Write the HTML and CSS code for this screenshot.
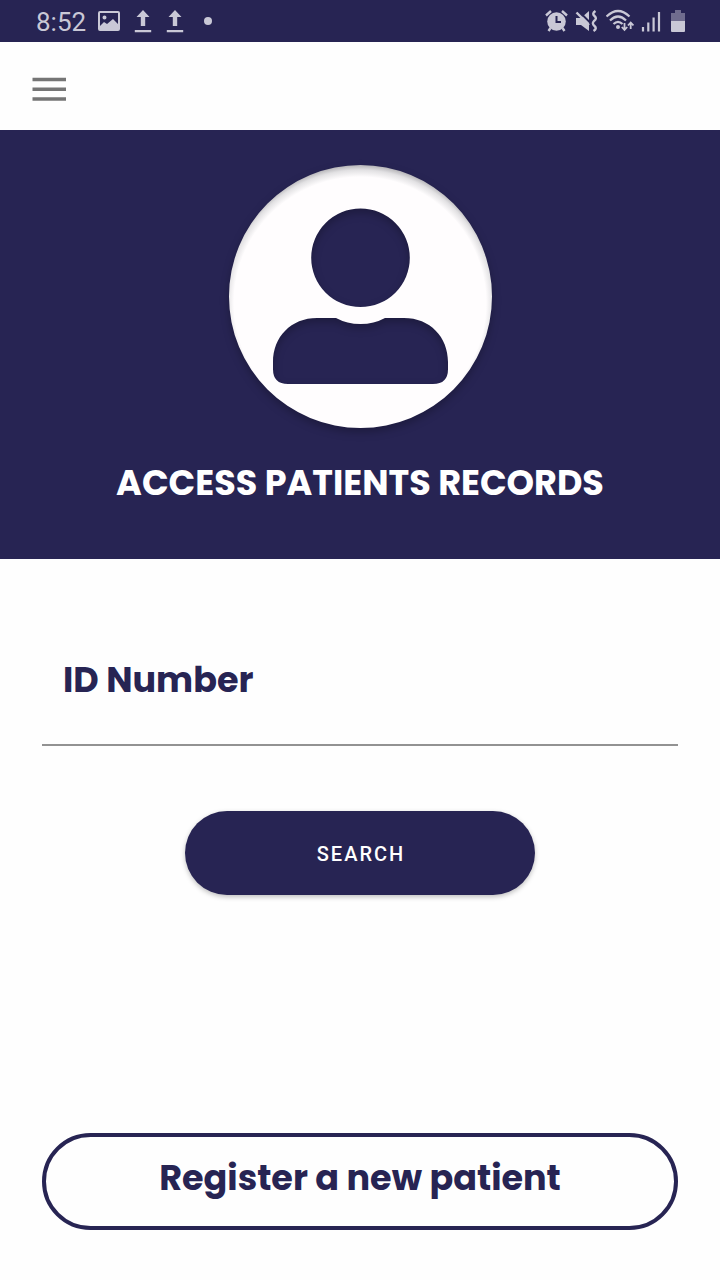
FILE: index.html
```html
<!DOCTYPE html>
<html lang="en">
<head>
<meta charset="utf-8">
<meta name="viewport" content="width=device-width, initial-scale=1">
<title>Access Patients Records</title>
<link rel="stylesheet" href="styles.css">
</head>
<body>
<div class="status-bar">
  <div class="status-left">
    <span class="clock">8:52</span>
    <svg width="22" height="20" viewBox="0 0 22 20" aria-hidden="true">
      <path fill="currentColor" fill-rule="evenodd" d="M2 0H20Q22 0 22 2V18Q22 20 20 20H2Q0 20 0 18V2Q0 0 2 0ZM2 2V15L6 11L9 13L15 8L20 13V2ZM6.500 4.500a2 2 0 1 1 0 4a2 2 0 0 1 0-4Z"/>
    </svg>
    <svg width="18" height="24" viewBox="0 0 18 24" aria-hidden="true">
      <path fill="currentColor" d="M9 1L15.500 8H11.200V17H6.800V8H2.500ZM0.800 21H17.200V23.200H0.800Z"/>
    </svg>
    <svg width="18" height="24" viewBox="0 0 18 24" aria-hidden="true">
      <path fill="currentColor" d="M9 1L15.500 8H11.200V17H6.800V8H2.500ZM0.800 21H17.200V23.200H0.800Z"/>
    </svg>
    <span class="dot"></span>
  </div>
  <div class="status-right">
    <svg width="24" height="24" viewBox="0 0 24 24" aria-hidden="true">
      <circle cx="12.500" cy="12.500" r="9.300" fill="currentColor"/>
      <path d="M2 6.500L7 2M23 6.500L18 2M6.500 19L4.500 22M18.500 19L20.500 22" stroke="currentColor" stroke-width="2.400" fill="none"/>
      <path class="icon-cut" d="M12.500 7V13H17" stroke-width="2" fill="none"/>
    </svg>
    <svg width="24" height="24" viewBox="0 0 24 24" aria-hidden="true">
      <path d="M1 9H6L14 2V22L6 16H1Z" fill="currentColor"/>
      <path class="icon-cut" d="M4 2.500L16 14.500" stroke-width="2" fill="none"/>
      <path d="M1.500 3.500L14 16" stroke="currentColor" stroke-width="2.400" fill="none"/>
      <path d="M20.500 2Q16.500 4.500 19.500 7Q22.500 9.500 19 12Q16.500 14.500 19.500 17Q22.500 19.500 18.500 22" stroke="currentColor" stroke-width="2.400" fill="none"/>
    </svg>
    <svg width="28" height="24" viewBox="0 0 28 24" aria-hidden="true">
      <path d="M0.500 7.500Q12 -3.500 23.500 7.500M4 11.500Q12 3.500 20 11.500M7.500 15Q12 10.500 16.500 15" fill="none" stroke="currentColor" stroke-width="2.200"/>
      <circle cx="12" cy="18" r="2" fill="currentColor"/>
      <path d="M18.500 14V21M15.800 18L18.500 21L21.200 18M24.700 20V13.500M22 16.500L24.700 13.500L27.400 16.500" fill="none" stroke="currentColor" stroke-width="1.800"/>
    </svg>
    <svg width="22" height="24" viewBox="0 0 22 24" aria-hidden="true">
      <path d="M2 18V22.500M7.300 13.500V22.500M12.600 8.500V22.500M18 3V22.500" stroke="currentColor" stroke-width="2.200"/>
    </svg>
    <svg width="16" height="24" viewBox="0 0 16 24" aria-hidden="true">
      <path d="M5 1H11V4H15V12H1V4H5Z" fill="currentColor" opacity="0.450"/>
      <path d="M1 12H15V22Q15 23 14 23H2Q1 23 1 22Z" fill="currentColor"/>
    </svg>
  </div>
</div>

<header class="app-bar">
  <button class="menu-button" type="button" aria-label="Open menu">
    <svg width="34" height="24" viewBox="0 0 34 24" aria-hidden="true">
      <path d="M0.500 2.500H34M0.500 12.200H34M0.500 22H34" stroke="currentColor" stroke-width="3.500"/>
    </svg>
  </button>
</header>

<section class="hero">
  <svg class="avatar" viewBox="18 14 264 264" aria-hidden="true">
    <defs>
      <radialGradient id="rim" gradientUnits="userSpaceOnUse" cx="150" cy="153" r="140">
        <stop offset="0.900" stop-color="#fffdfe"/>
        <stop offset="0.950" stop-color="#e2e1e3"/>
        <stop offset="1" stop-color="#a3a2a6"/>
      </radialGradient>
    </defs>
    <path class="avatar-shape" fill="url(#rim)" fill-rule="evenodd" d="M150.500 15a131.500 131.500 0 1 1 0 263a131.500 131.500 0 0 1 0-263ZM150.500 58.500a49.300 49.300 0 1 0 0 98.600a49.300 49.300 0 0 0 0-98.600ZM107 168C81 168 63 187 63 212V219Q63 234 78 234H223Q238 234 238 219V212C238 187 220 168 194 168H175Q164 174 150.500 174Q137 174 126 168Z"/>
  </svg>
  <h1 class="hero-title">ACCESS PATIENTS RECORDS</h1>
</section>

<main class="content">
  <form class="search-form">
    <input class="id-input" type="text" placeholder="ID Number" aria-label="ID Number">
    <button class="search-button" type="button">SEARCH</button>
  </form>
  <button class="register-button" type="button">Register a new patient</button>
</main>
</body>
</html>
```

FILE: styles.css
```css
:root {
  --navy: #272453;
  --status-ink: #c9c8d6;
  --heading-font: Poppins, Inter, "Open Sans", sans-serif;
}

* {
  box-sizing: border-box;
}

body {
  display: flex;
  flex-direction: column;
  min-height: 100vh;
  margin: 0;
  background: #fefefe;
  color: var(--navy);
  font-family: Roboto, sans-serif;
}

svg {
  display: block;
}

button {
  font: inherit;
  cursor: pointer;
}

.status-bar {
  display: flex;
  align-items: center;
  justify-content: space-between;
  height: 42px;
  padding: 0 34px 0 36px;
  background: var(--navy);
  color: var(--status-ink);
}

.status-left {
  display: flex;
  align-items: center;
  gap: 14px;
}

.clock {
  margin-right: -2px;
  padding-top: 2px;
  font-size: 26px;
  line-height: 40px;
}

.dot {
  width: 8px;
  height: 8px;
  margin-left: 6px;
  border-radius: 50%;
  background: currentColor;
}

.status-right {
  display: flex;
  align-items: center;
  gap: 7px;
}

.icon-cut {
  stroke: var(--navy);
}

.app-bar {
  display: flex;
  align-items: center;
  height: 88px;
  padding: 6px 32px 0;
}

.menu-button {
  padding: 0;
  border: 0;
  background: none;
  color: #757575;
}

.hero {
  display: flex;
  flex-direction: column;
  align-items: center;
  padding: 34px 24px 52px;
  background: var(--navy);
}

.avatar {
  width: 264px;
  max-width: 100%;
  overflow: visible;
}

.avatar-shape {
  filter: drop-shadow(0 4px 4px rgba(0, 0, 0, 0.25));
}

.hero-title {
  margin: 31px 0 0;
  color: #fff;
  font: 700 35px/48px var(--heading-font);
  text-align: center;
}

.content {
  display: flex;
  flex: 1;
  flex-direction: column;
  justify-content: space-between;
  gap: 48px;
  padding: 67px 42px 50px;
}

.search-form {
  display: flex;
  flex-direction: column;
  align-items: center;
  gap: 65px;
}

.id-input {
  width: 100%;
  height: 120px;
  padding: 0 21px 12px;
  border: 0;
  border-bottom: 2px solid #929292;
  border-radius: 0;
  outline: 0;
  background: transparent;
  color: var(--navy);
  font: 700 35px/48px var(--heading-font);
}

.id-input::placeholder {
  color: var(--navy);
  opacity: 1;
}

.search-button {
  width: 350px;
  max-width: 100%;
  height: 84px;
  padding: 2px 0 0 2px;
  border: 0;
  border-radius: 42px;
  background: var(--navy);
  box-shadow: 0 2px 5px rgba(0, 0, 0, 0.25);
  color: #fff;
  font-size: 20px;
  font-weight: 500;
  letter-spacing: 2px;
}

.register-button {
  width: 100%;
  min-height: 97px;
  padding: 16px 24px 24px;
  border: 4px solid var(--navy);
  border-radius: 49px;
  background: transparent;
  color: var(--navy);
  font: 700 35px/48px var(--heading-font);
}
```
